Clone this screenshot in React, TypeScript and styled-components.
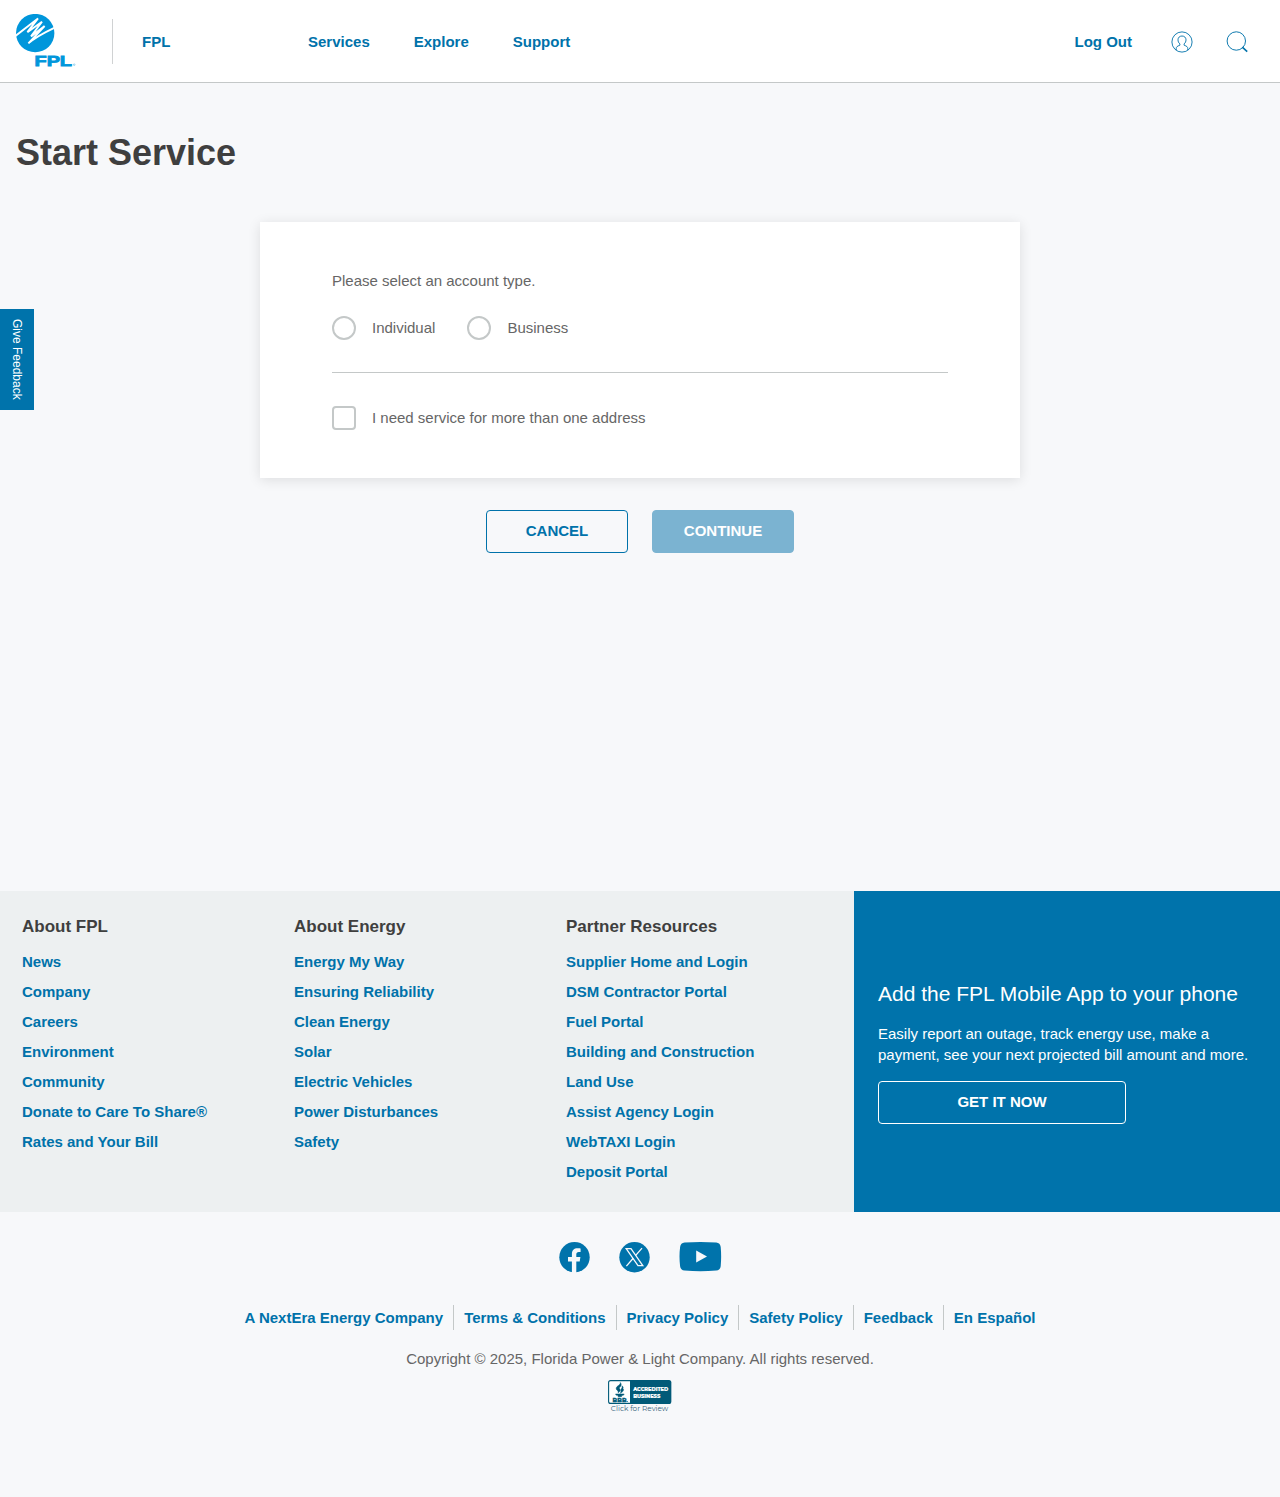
import React from "react";
import styled, { createGlobalStyle } from "styled-components";

const blue = "#0072aa";
const font = '"Liberation Sans", Arial, Helvetica, sans-serif';

const GlobalStyle = createGlobalStyle`
  *, *::before, *::after { box-sizing: border-box; }
  body {
    margin: 0;
    background: #f7f8fa;
    color: #666;
    font: 15px/21px ${font};
  }
  a { color: inherit; text-decoration: none; }
  h1, h2, h3, p, ul { margin: 0; padding: 0; }
  ul { list-style: none; }
  button { font-family: inherit; }
  svg { display: block; }
`;

const Page = styled.div`
  display: flex;
  flex-direction: column;
  min-height: 1497px;
`;

const Header = styled.header`
  display: flex;
  align-items: center;
  height: 83px;
  padding: 0 32.5px 0 16px;
  background: #fff;
  border-bottom: 1px solid #c4c8c8;
  color: ${blue};
  font-weight: bold;
`;

const LogoLink = styled.a`
  width: 96px;
  height: 54px;
`;

const Site = styled.a`
  display: flex;
  align-items: center;
  width: 196px;
  height: 45px;
  padding-left: 29px;
  border-left: 1px solid #d0d2d3;
`;

const Nav = styled.nav`
  display: flex;
  flex: 1;
  gap: 44px;
`;

const Tools = styled.div`
  display: flex;
  align-items: center;
`;

const ToolIcon = styled.a<{ $gap: number }>`
  margin-left: ${(p) => p.$gap}px;
  padding-top: 1px;
`;

const Main = styled.main`
  display: flex;
  flex-direction: column;
  height: 808px;
  padding: 48px 16px 0;
`;

const Title = styled.h1`
  color: #3f3f3f;
  font-size: 36px;
  line-height: 43px;
`;

const Card = styled.section`
  width: 760px;
  height: 256px;
  margin: 48px auto 0;
  padding: 48px 72px;
  background: #fff;
  box-shadow: 0 2px 12px rgba(0, 0, 0, 0.11);
`;

const Options = styled.div`
  display: flex;
  gap: 32px;
  margin-top: 25px;
  padding-bottom: 32px;
  border-bottom: 1px solid #c4c8c8;
`;

const Choice = styled.label`
  display: flex;
  align-items: flex-start;
  gap: 16px;
  height: 24px;
  line-height: 23px;
`;

const Control = styled.input<{ $radius: string }>`
  appearance: none;
  width: 24px;
  height: 24px;
  margin: 0;
  border: 2px solid #c4c8c8;
  border-radius: ${(p) => p.$radius};
  background: #fff;
`;

const SingleOption = styled.div`
  margin-top: 33px;
`;

const Actions = styled.div`
  display: flex;
  justify-content: center;
  gap: 24px;
  margin-top: 32px;
`;

const Button = styled.button<{ $filled?: boolean }>`
  width: 142px;
  height: 43px;
  padding: 0 0 3px;
  border: 1px solid ${(p) => (p.$filled ? "#7bb3d1" : blue)};
  border-radius: 4px;
  background: ${(p) => (p.$filled ? "#7bb3d1" : "transparent")};
  color: ${(p) => (p.$filled ? "#fff" : blue)};
  font-size: 15px;
  font-weight: bold;
`;

const FooterTop = styled.section`
  display: flex;
  height: 321px;
`;

const LinkArea = styled.div`
  display: grid;
  grid-template-columns: repeat(3, 272px);
  width: 854px;
  padding: 25px 0 0 22px;
  background: #edf0f1;
`;

const ColumnTitle = styled.h3`
  color: #3f3f3f;
  font-size: 17px;
  line-height: 21px;
  margin-bottom: 10px;
`;

const ColumnLink = styled.a`
  display: block;
  color: ${blue};
  font-weight: bold;
  line-height: 30px;
`;

const Promo = styled.div`
  display: flex;
  flex: 1;
  flex-direction: column;
  align-items: flex-start;
  padding: 90px 24px 0;
  background: #0073ab;
  color: #fff;
`;

const PromoTitle = styled.h2`
  font-size: 21px;
  font-weight: normal;
  line-height: 26px;
`;

const PromoText = styled.p`
  margin: 16px 0;
  white-space: nowrap;
`;

const PromoButton = styled.a`
  display: flex;
  align-items: center;
  justify-content: center;
  width: 248px;
  height: 43px;
  padding-bottom: 2px;
  border: 1px solid #fff;
  border-radius: 4px;
  font-weight: bold;
`;

const FooterBottom = styled.footer`
  display: flex;
  flex-direction: column;
  align-items: center;
  padding-top: 30px;
`;

const Social = styled.div`
  display: flex;
  align-items: center;
  gap: 29px;
  height: 31px;
`;

const Legal = styled.nav`
  display: flex;
  margin-top: 32px;
  color: ${blue};
  font-weight: bold;
  line-height: 25px;
`;

const LegalLink = styled.a`
  padding: 0 10px;
  & + & { border-left: 1px solid #c4c8c8; }
`;

const Copyright = styled.p`
  margin: 18px 0 11px;
`;

const FeedbackTab = styled.button`
  position: absolute;
  left: 0;
  top: 309px;
  display: flex;
  align-items: center;
  justify-content: center;
  width: 34px;
  height: 101px;
  padding: 0;
  border: 0;
  background: #0073ab;
  color: #fff;
  font-size: 12px;
  writing-mode: vertical-rl;
`;

const Logo = () => (
  <svg width="60" height="54" viewBox="16 14 60 54" role="img" aria-label="FPL logo">
    <circle cx="35.2" cy="33.1" r="19.2" fill="#0096db" />
    <path
      d="M15.2 36.2 L38 18.4 L27.4 32.2 L42 21.8 L31 36.4 L44.6 26 L28.4 43.4 Q36 36.5 54.8 27.6"
      fill="none"
      stroke="#fff"
      strokeWidth="1.9"
      strokeLinejoin="miter"
      strokeMiterlimit="3"
    />
    <text
      x="34.5"
      y="65.6"
      fill="#0096db"
      stroke="#0096db"
      strokeWidth="0.8"
      fontFamily="Liberation Sans, Arial, sans-serif"
      fontSize="14.2"
      fontWeight="bold"
      textLength="37.5"
      lengthAdjust="spacingAndGlyphs"
    >
      FPL
    </text>
    <circle cx="74.2" cy="64.7" r="0.8" fill="none" stroke="#6bbfe9" strokeWidth="0.7" />
  </svg>
);

const UserIcon = () => (
  <svg width="22" height="22" viewBox="0 0 22 22" fill="none" stroke={blue} strokeWidth="0.9">
    <circle cx="11" cy="11" r="10.1" />
    <path d="M5.2 19.2V17.7C5.2 15.8 6.2 15.2 8.9 14.2V12.9C7.6 11.8 7 10.5 7 8.8C7 6.6 8.6 5 11 5S15 6.6 15 8.8C15 10.5 14.4 11.8 13.1 12.9V14.2C15.8 15.2 16.8 15.8 16.8 17.7V19.2" />
  </svg>
);

const SearchIcon = () => (
  <svg width="22" height="22" viewBox="0 0 22 22" fill="none" stroke={blue}>
    <circle cx="10.3" cy="10" r="9.2" strokeWidth="0.95" />
    <path d="M16.3 16.2 21.2 20.7" strokeWidth="1.6" />
  </svg>
);

const FacebookIcon = () => (
  <svg width="31" height="31" viewBox="0 0 31 31">
    <circle cx="15.5" cy="15.2" r="15.2" fill="#0073ab" />
    <path
      d="M12.9 31V19.4H9V15H12.9V12C12.9 8.1 15.1 6.2 18.6 6.2C20 6.2 21.6 6.4 21.6 6.4V10H19.8C18 10 17.3 11.1 17.3 12.3V15H21.4L20.7 19.4H17.3V31Z"
      fill="#f7f8fa"
    />
  </svg>
);

const XIcon = () => (
  <svg width="31" height="31" viewBox="0 0 31 31">
    <circle cx="15.5" cy="15.2" r="15.2" fill="#0073ab" />
    <path d="M7.2 6.6H12L23.8 23.6H19Z" fill="none" stroke="#f7f8fa" strokeWidth="1.3" />
    <path d="M23 6.1 16.5 13.6M14.2 16.3 7.4 24.1" fill="none" stroke="#f7f8fa" strokeWidth="1.3" />
  </svg>
);

const YouTubeIcon = () => (
  <svg width="43" height="31" viewBox="0 0 43 31">
    <path
      d="M5.6 0.6Q21.5 -0.6 37.2 0.6Q41.2 1 41.7 5Q42.6 14.6 41.7 24.2Q41.2 28.2 37.2 28.6Q21.5 29.8 5.6 28.6Q1.6 28.2 1.1 24.2Q-0.1 14.6 1.1 5Q1.6 1 5.6 0.6Z"
      fill="#0073ab"
    />
    <path d="M17.2 8.4V20.6L28 14.5Z" fill="#f7f8fa" />
  </svg>
);

const BbbSeal = () => (
  <svg width="64" height="33" viewBox="0 0 64 33" fontFamily="Montserrat, Open Sans, sans-serif">
    <rect x="0.6" y="0.6" width="62.2" height="22.8" rx="2" fill="#fff" stroke="#015a78" strokeWidth="1.1" />
    <path d="M22 0.5H61a2 2 0 0 1 2 2V21.5a2 2 0 0 1-2 2H22Z" fill="#015a78" />
    <path
      d="M12.3 2.5C13 5 8.3 5.8 8.2 8.4C8.1 10.2 10.8 10.6 10.2 12.8C13.1 10.8 12.2 9.3 11.1 8C13.2 6.6 14 4.4 12.3 2.5ZM14.1 5.9C14.7 8 12.6 9 12.8 10.4C12.9 11.4 13.3 11.8 12.2 13.3C15.1 12 16.4 9.9 14.9 8.6C15.4 7.6 15.3 6.7 14.1 5.9ZM7.5 14H16.2L15.3 15.3H13.9L13.5 16.7H10.2L9.8 15.3H8.4Z"
      fill="#015a78"
      stroke="#015a78"
      strokeWidth="0.5"
    />
    <text x="4.6" y="22" fontSize="6" fontWeight="800" fill="#015a78" stroke="#015a78" strokeWidth="0.3" textLength="14" lengthAdjust="spacingAndGlyphs">BBB</text>
    <circle cx="19.3" cy="21.4" r="0.5" fill="#015a78" />
    <g fill="#fff" stroke="#fff" strokeWidth="0.2" fontSize="5.5" fontWeight="800">
      <text x="25.2" y="11.4" textLength="35" lengthAdjust="spacingAndGlyphs">ACCREDITED</text>
      <text x="25.2" y="17.7" textLength="27" lengthAdjust="spacingAndGlyphs">BUSINESS</text>
    </g>
    <text x="2.8" y="30.8" fontSize="6.7" fill="#35647c" textLength="57.5" lengthAdjust="spacingAndGlyphs">
      Click for Review
    </text>
  </svg>
);

const columns = [
  {
    title: "About FPL",
    links: ["News", "Company", "Careers", "Environment", "Community", "Donate to Care To Share®", "Rates and Your Bill"],
  },
  {
    title: "About Energy",
    links: ["Energy My Way", "Ensuring Reliability", "Clean Energy", "Solar", "Electric Vehicles", "Power Disturbances", "Safety"],
  },
  {
    title: "Partner Resources",
    links: [
      "Supplier Home and Login",
      "DSM Contractor Portal",
      "Fuel Portal",
      "Building and Construction",
      "Land Use",
      "Assist Agency Login",
      "WebTAXI Login",
      "Deposit Portal",
    ],
  },
];

const legalLinks = [
  "A NextEra Energy Company",
  "Terms & Conditions",
  "Privacy Policy",
  "Safety Policy",
  "Feedback",
  "En Español",
];

export default function App() {
  return (
    <Page>
      <GlobalStyle />
      <Header>
        <LogoLink href="#"><Logo /></LogoLink>
        <Site href="#">FPL</Site>
        <Nav>
          <a href="#">Services</a>
          <a href="#">Explore</a>
          <a href="#">Support</a>
        </Nav>
        <Tools>
          <a href="#">Log Out</a>
          <ToolIcon href="#" $gap={38.5} aria-label="Account"><UserIcon /></ToolIcon>
          <ToolIcon href="#" $gap={33} aria-label="Search"><SearchIcon /></ToolIcon>
        </Tools>
      </Header>

      <Main>
        <Title>Start Service</Title>
        <Card>
          <p>Please select an account type.</p>
          <Options>
            <Choice><Control type="radio" name="type" $radius="50%" />Individual</Choice>
            <Choice><Control type="radio" name="type" $radius="50%" />Business</Choice>
          </Options>
          <SingleOption>
            <Choice><Control type="checkbox" $radius="4px" />I need service for more than one address</Choice>
          </SingleOption>
        </Card>
        <Actions>
          <Button>CANCEL</Button>
          <Button $filled>CONTINUE</Button>
        </Actions>
      </Main>

      <FooterTop>
        <LinkArea>
          {columns.map((column) => (
            <div key={column.title}>
              <ColumnTitle>{column.title}</ColumnTitle>
              <ul>
                {column.links.map((link) => (
                  <li key={link}><ColumnLink href="#">{link}</ColumnLink></li>
                ))}
              </ul>
            </div>
          ))}
        </LinkArea>
        <Promo>
          <PromoTitle>Add the FPL Mobile App to your phone</PromoTitle>
          <PromoText>
            Easily report an outage, track energy use, make a<br />
            payment, see your next projected bill amount and more.
          </PromoText>
          <PromoButton href="#">GET IT NOW</PromoButton>
        </Promo>
      </FooterTop>

      <FooterBottom>
        <Social>
          <a href="#" aria-label="Facebook"><FacebookIcon /></a>
          <a href="#" aria-label="X"><XIcon /></a>
          <a href="#" aria-label="YouTube"><YouTubeIcon /></a>
        </Social>
        <Legal>
          {legalLinks.map((link) => <LegalLink key={link} href="#">{link}</LegalLink>)}
        </Legal>
        <Copyright>Copyright © 2025, Florida Power &amp; Light Company. All rights reserved.</Copyright>
        <BbbSeal />
      </FooterBottom>

      <FeedbackTab>Give Feedback</FeedbackTab>
    </Page>
  );
}
